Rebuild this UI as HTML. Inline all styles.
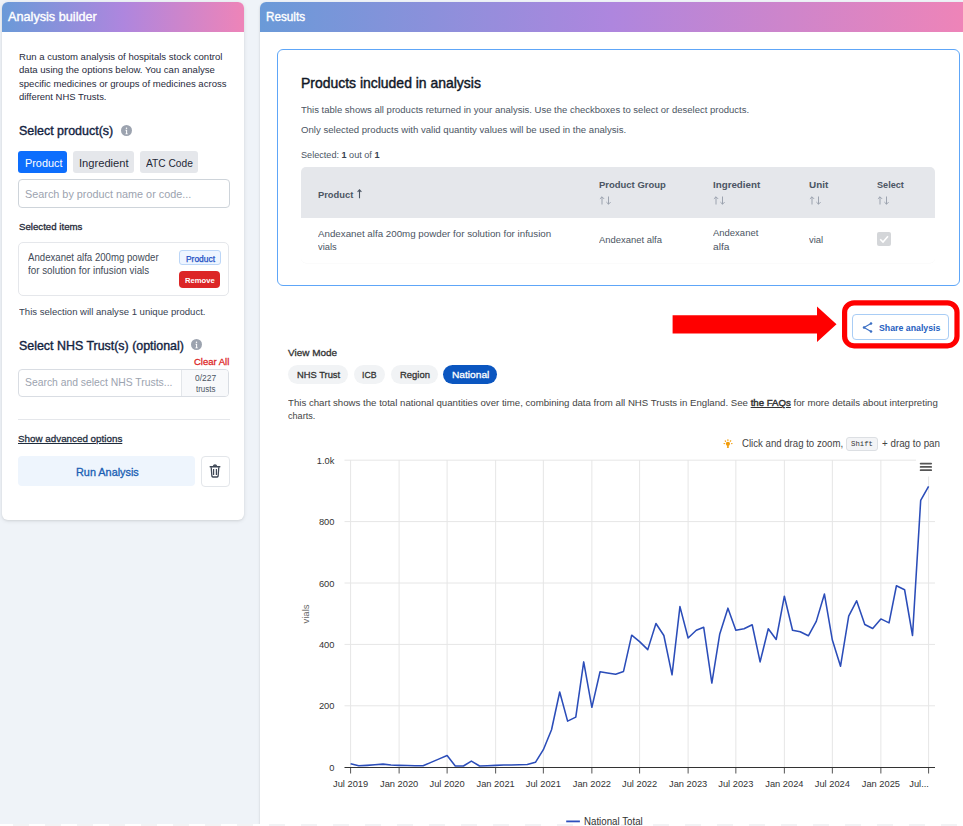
<!DOCTYPE html>
<html><head><meta charset="utf-8"><style>
html,body{margin:0;padding:0;}
body{width:963px;height:826px;overflow:hidden;position:relative;background:#eff3f8;font-family:"Liberation Sans", sans-serif;}
.t{position:absolute;white-space:pre;line-height:1;}
b{font-weight:700;}
</style></head><body>
<div style="position:absolute;left:2.00px;top:2.00px;width:242.00px;height:517.50px;background:#fff;border-radius:6px;box-shadow:0 1px 4px rgba(0,0,0,0.10),0 1px 2px rgba(0,0,0,0.05);"></div>
<div style="position:absolute;left:2.00px;top:2.00px;width:242.00px;height:30.30px;background:linear-gradient(90deg,#6a9ad8 0%,#ae86de 50%,#ee84b8 100%);border-radius:6px 6px 0 0;"></div>
<span id="t1" class="t" style="left:7.60px;transform-origin:0 0;top:12.35px;font-size:11.90px;color:#fff;font-weight:400;transform:scaleX(1.0663);-webkit-text-stroke:0.36px currentColor;">Analysis builder</span>
<span id="t2" class="t" style="left:18.70px;transform-origin:0 0;top:51.85px;font-size:9.90px;color:#1f2a3c;font-weight:400;transform:scaleX(0.9676);">Run a custom analysis of hospitals stock control</span>
<span id="t3" class="t" style="left:18.70px;transform-origin:0 0;top:64.85px;font-size:9.90px;color:#1f2a3c;font-weight:400;transform:scaleX(0.9696);">data using the options below. You can analyse</span>
<span id="t4" class="t" style="left:18.70px;transform-origin:0 0;top:78.85px;font-size:9.90px;color:#1f2a3c;font-weight:400;transform:scaleX(0.9669);">specific medicines or groups of medicines across</span>
<span id="t5" class="t" style="left:18.70px;transform-origin:0 0;top:91.85px;font-size:9.90px;color:#1f2a3c;font-weight:400;transform:scaleX(0.9566);">different NHS Trusts.</span>
<span id="t6" class="t" style="left:18.70px;transform-origin:0 0;top:125.20px;font-size:12.20px;color:#13233f;font-weight:400;transform:scaleX(1.0225);-webkit-text-stroke:0.37px currentColor;">Select product(s)</span>
<svg style="position:absolute;left:120.8px;top:125.3px" width="11" height="11" viewBox="0 0 16 16"><circle cx="8" cy="8" r="8" fill="#9ca3af"/><circle cx="8" cy="4.6" r="1.1" fill="#fff"/><path d="M6.6 7h2.3v5.2h1v1.2H6.4v-1.2h1V8.2h-.8z" fill="#fff"/></svg>
<div style="position:absolute;left:18.40px;top:151.20px;width:49.00px;height:22.20px;background:#0d6efd;border-radius:3px;"></div>
<span id="t7" class="t" style="left:24.50px;transform-origin:0 0;top:158.00px;font-size:10.60px;color:#fff;font-weight:400;transform:scaleX(1.0242);">Product</span>
<div style="position:absolute;left:73.20px;top:151.20px;width:61.10px;height:22.20px;background:#e5e7eb;border-radius:3px;"></div>
<span id="t8" class="t" style="left:79.30px;transform-origin:0 0;top:158.00px;font-size:10.60px;color:#1f2937;font-weight:400;transform:scaleX(1.0525);">Ingredient</span>
<div style="position:absolute;left:140.30px;top:151.20px;width:57.70px;height:22.20px;background:#e5e7eb;border-radius:3px;"></div>
<span id="t9" class="t" style="left:145.80px;transform-origin:0 0;top:158.00px;font-size:10.60px;color:#1f2937;font-weight:400;transform:scaleX(0.9615);">ATC Code</span>
<div style="position:absolute;left:18.40px;top:179.30px;width:211.20px;height:28.30px;box-sizing:border-box;border:1px solid #ced4da;border-radius:4px;background:#fff;"></div>
<span id="t10" class="t" style="left:24.80px;transform-origin:0 0;top:189.00px;font-size:10.60px;color:#9ca3af;font-weight:400;transform:scaleX(1.0232);">Search by product name or code...</span>
<span id="t11" class="t" style="left:18.70px;transform-origin:0 0;top:222.10px;font-size:9.40px;color:#1f2937;font-weight:400;transform:scaleX(1.0309);-webkit-text-stroke:0.28px currentColor;">Selected items</span>
<div style="position:absolute;left:18.40px;top:241.50px;width:211.00px;height:54.70px;box-sizing:border-box;border:1px solid #e5e7eb;border-radius:5px;background:#fff;"></div>
<span id="t12" class="t" style="left:27.50px;transform-origin:0 0;top:252.76px;font-size:10.08px;color:#434b57;font-weight:400;transform:scaleX(0.9552);">Andexanet alfa 200mg powder</span>
<span id="t13" class="t" style="left:27.50px;transform-origin:0 0;top:265.76px;font-size:10.08px;color:#434b57;font-weight:400;transform:scaleX(0.9746);">for solution for infusion vials</span>
<div style="position:absolute;left:178.90px;top:250.20px;width:41.80px;height:15.20px;box-sizing:border-box;background:#eef5ff;border:1px solid #bcd6f7;border-radius:3px;"></div>
<span id="t14" class="t" style="left:185.80px;transform-origin:0 0;top:255.70px;font-size:8.20px;color:#1d4fc4;font-weight:400;transform:scaleX(1.0277);-webkit-text-stroke:0.25px currentColor;">Product</span>
<div style="position:absolute;left:179.20px;top:271.00px;width:40.70px;height:16.50px;background:#dc2626;border-radius:4px;"></div>
<span id="t15" class="t" style="left:185.00px;transform-origin:0 0;top:276.80px;font-size:8.00px;color:#fff;font-weight:700;transform:scaleX(0.9574);">Remove</span>
<span id="t16" class="t" style="left:18.50px;transform-origin:0 0;top:306.81px;font-size:9.97px;color:#374151;font-weight:400;transform:scaleX(0.9589);">This selection will analyse 1 unique product.</span>
<span id="t17" class="t" style="left:18.70px;transform-origin:0 0;top:340.20px;font-size:12.20px;color:#13233f;font-weight:400;transform:scaleX(1.0187);-webkit-text-stroke:0.37px currentColor;">Select NHS Trust(s) (optional)</span>
<svg style="position:absolute;left:191.1px;top:339.4px" width="11" height="11" viewBox="0 0 16 16"><circle cx="8" cy="8" r="8" fill="#9ca3af"/><circle cx="8" cy="4.6" r="1.1" fill="#fff"/><path d="M6.6 7h2.3v5.2h1v1.2H6.4v-1.2h1V8.2h-.8z" fill="#fff"/></svg>
<span id="t18" class="t" style="left:193.80px;transform-origin:0 0;top:357.80px;font-size:9.00px;color:#dc2626;font-weight:400;transform:scaleX(1.0532);-webkit-text-stroke:0.27px currentColor;">Clear All</span>
<div style="position:absolute;left:18.40px;top:368.50px;width:211.00px;height:28.70px;box-sizing:border-box;border:1px solid #d9dde3;border-radius:4px;background:#fff;"></div>
<div style="position:absolute;left:181.40px;top:369.50px;width:47.00px;height:26.70px;background:#f8f9fb;border-left:1px solid #e3e6ea;border-radius:0 3px 3px 0;box-sizing:border-box;"></div>
<span id="t19" class="t" style="left:24.80px;transform-origin:0 0;top:377.65px;font-size:10.30px;color:#9ca3af;font-weight:400;transform:scaleX(1.0060);">Search and select NHS Trusts...</span>
<span id="t20" class="t" style="left:194.80px;transform-origin:0 0;top:374.05px;font-size:8.51px;color:#4b5563;font-weight:400;transform:scaleX(0.9915);">0/227</span>
<span id="t21" class="t" style="left:195.70px;transform-origin:0 0;top:385.05px;font-size:8.51px;color:#4b5563;font-weight:400;transform:scaleX(0.9335);">trusts</span>
<div style="position:absolute;left:18.40px;top:419.10px;width:211.30px;height:1.00px;background:#e5e7eb;"></div>
<span id="t22" class="t" style="left:18.40px;transform-origin:0 0;top:434.10px;font-size:9.40px;color:#1f2d3d;font-weight:400;transform:scaleX(1.0476);text-decoration:underline;-webkit-text-stroke:0.28px currentColor;">Show advanced options</span>
<div style="position:absolute;left:18.40px;top:456.20px;width:176.70px;height:30.20px;background:#eef5fd;border-radius:4px;"></div>
<span id="t23" class="t" style="left:75.70px;transform-origin:0 0;top:466.90px;font-size:10.80px;color:#1a5fb4;font-weight:400;transform:scaleX(1.0061);-webkit-text-stroke:0.32px currentColor;">Run Analysis</span>
<div style="position:absolute;left:201.00px;top:456.20px;width:29.00px;height:30.60px;box-sizing:border-box;border:1px solid #e3e6ea;border-radius:4px;background:#fff;"></div>
<svg style="position:absolute;left:209.2px;top:464.0px" width="12" height="14" viewBox="0 0 12 14"><path d="M4.5 2.2 Q4.7 1 6 1 Q7.3 1 7.5 2.2" fill="none" stroke="#3f4856" stroke-width="1.3"/><path d="M1.2 2.8 H10.8" stroke="#3f4856" stroke-width="1.4" stroke-linecap="round"/><path d="M2.2 3.2 L2.9 12.2 Q3 13 3.8 13 H8.2 Q9 13 9.1 12.2 L9.8 3.2" fill="none" stroke="#3f4856" stroke-width="1.3"/><path d="M4.6 5 V11 M7.4 5 V11" stroke="#3f4856" stroke-width="1.2"/></svg>
<div style="position:absolute;left:260.00px;top:2.00px;width:740.00px;height:898.00px;background:#fff;border-radius:6px 0 0 0;box-shadow:0 1px 3px rgba(0,0,0,0.12),0 1px 2px rgba(0,0,0,0.06);"></div>
<div style="position:absolute;left:260.00px;top:2.00px;width:703.00px;height:30.30px;background:linear-gradient(90deg,#6a9ad8 0%,#ae86de 50%,#ee84b8 100%);border-radius:6px 0 0 0;"></div>
<span id="t24" class="t" style="left:266.20px;transform-origin:0 0;top:12.35px;font-size:11.90px;color:#fff;font-weight:400;transform:scaleX(0.9860);-webkit-text-stroke:0.36px currentColor;">Results</span>
<div style="position:absolute;left:277.30px;top:49.20px;width:682.90px;height:237.00px;box-sizing:border-box;border:1.5px solid #5ea6f8;border-radius:6px;background:#fff;"></div>
<span id="t25" class="t" style="left:300.90px;transform-origin:0 0;top:76.15px;font-size:14.30px;color:#111827;font-weight:400;transform:scaleX(0.9757);-webkit-text-stroke:0.43px currentColor;">Products included in analysis</span>
<span id="t26" class="t" style="left:300.90px;transform-origin:0 0;top:104.86px;font-size:9.87px;color:#4b5563;font-weight:400;transform:scaleX(0.9642);">This table shows all products returned in your analysis. Use the checkboxes to select or deselect products.</span>
<span id="t27" class="t" style="left:300.90px;transform-origin:0 0;top:124.86px;font-size:9.87px;color:#4b5563;font-weight:400;transform:scaleX(0.9727);">Only selected products with valid quantity values will be used in the analysis.</span>
<span id="t28" class="t" style="left:300.90px;transform-origin:0 0;top:149.97px;font-size:9.66px;color:#4b5563;font-weight:400;transform:scaleX(0.9431);">Selected: <b style="color:#374151">1</b> out of <b style="color:#374151">1</b></span>
<div style="position:absolute;left:300.70px;top:167.00px;width:634.30px;height:95.50px;background:#fff;border-radius:5px;box-shadow:0 0.5px 0.5px rgba(0,0,0,0.03);"></div>
<div style="position:absolute;left:300.70px;top:167.00px;width:634.30px;height:50.60px;background:#e5e7eb;border-radius:5px 5px 0 0;"></div>
<span id="t29" class="t" style="left:317.80px;transform-origin:0 0;top:190.80px;font-size:9.00px;color:#4b5563;font-weight:700;transform:scaleX(1.0378);">Product</span>
<svg style="position:absolute;left:356px;top:189.2px" width="7" height="9.5" viewBox="0 0 7 9.5"><path d="M3.5 0.8 V9.2 M1.6 2.8 L3.5 0.8 L5.4 2.8" fill="none" stroke="#4b5563" stroke-width="1.1"/></svg>
<span id="t30" class="t" style="left:598.50px;transform-origin:0 0;top:180.70px;font-size:9.20px;color:#4b5563;font-weight:700;transform:scaleX(1.0304);">Product Group</span>
<svg style="position:absolute;left:598.5px;top:195.5px" width="13" height="9" viewBox="0 0 13 9"><path d="M3 0.8 V8.5 M0.9 2.9 L3 0.8 L5.1 2.9 M9.5 0.5 V8.2 M7.4 6.1 L9.5 8.2 L11.6 6.1" fill="none" stroke="#9ca3af" stroke-width="1"/></svg>
<span id="t31" class="t" style="left:713.00px;transform-origin:0 0;top:180.70px;font-size:9.20px;color:#4b5563;font-weight:700;transform:scaleX(1.0625);">Ingredient</span>
<svg style="position:absolute;left:713.0px;top:195.5px" width="13" height="9" viewBox="0 0 13 9"><path d="M3 0.8 V8.5 M0.9 2.9 L3 0.8 L5.1 2.9 M9.5 0.5 V8.2 M7.4 6.1 L9.5 8.2 L11.6 6.1" fill="none" stroke="#9ca3af" stroke-width="1"/></svg>
<span id="t32" class="t" style="left:809.00px;transform-origin:0 0;top:180.70px;font-size:9.20px;color:#4b5563;font-weight:700;transform:scaleX(1.0751);">Unit</span>
<svg style="position:absolute;left:809.0px;top:195.5px" width="13" height="9" viewBox="0 0 13 9"><path d="M3 0.8 V8.5 M0.9 2.9 L3 0.8 L5.1 2.9 M9.5 0.5 V8.2 M7.4 6.1 L9.5 8.2 L11.6 6.1" fill="none" stroke="#9ca3af" stroke-width="1"/></svg>
<span id="t33" class="t" style="left:876.60px;transform-origin:0 0;top:180.70px;font-size:9.20px;color:#4b5563;font-weight:700;transform:scaleX(0.9934);">Select</span>
<svg style="position:absolute;left:876.6px;top:195.5px" width="13" height="9" viewBox="0 0 13 9"><path d="M3 0.8 V8.5 M0.9 2.9 L3 0.8 L5.1 2.9 M9.5 0.5 V8.2 M7.4 6.1 L9.5 8.2 L11.6 6.1" fill="none" stroke="#9ca3af" stroke-width="1"/></svg>
<span id="t34" class="t" style="left:317.80px;transform-origin:0 0;top:228.81px;font-size:9.97px;color:#4b5563;font-weight:400;transform:scaleX(0.9786);">Andexanet alfa 200mg powder for solution for infusion</span>
<span id="t35" class="t" style="left:317.80px;transform-origin:0 0;top:241.81px;font-size:9.97px;color:#4b5563;font-weight:400;transform:scaleX(0.9372);">vials</span>
<span id="t36" class="t" style="left:598.50px;transform-origin:0 0;top:234.81px;font-size:9.97px;color:#4b5563;font-weight:400;transform:scaleX(0.9471);">Andexanet alfa</span>
<span id="t37" class="t" style="left:713.00px;transform-origin:0 0;top:227.81px;font-size:9.97px;color:#4b5563;font-weight:400;transform:scaleX(0.9502);">Andexanet</span>
<span id="t38" class="t" style="left:713.00px;transform-origin:0 0;top:241.81px;font-size:9.97px;color:#4b5563;font-weight:400;transform:scaleX(1.0262);">alfa</span>
<span id="t39" class="t" style="left:809.00px;transform-origin:0 0;top:234.81px;font-size:9.97px;color:#4b5563;font-weight:400;transform:scaleX(0.9486);">vial</span>
<svg style="position:absolute;left:876.6px;top:231.8px" width="14" height="14" viewBox="0 0 14 14"><rect x="0" y="0" width="14" height="14" rx="2" fill="#d4d6d9"/><path d="M3.2 7.2 L6 10 L11 4.2" fill="none" stroke="#fff" stroke-width="1.6"/></svg>
<svg style="position:absolute;left:0;top:0" width="963" height="826"><polygon points="672.6,315.2 817,315.2 817,306.4 836.5,324.3 817,342 817,333.4 672.6,333.4" fill="#ff0000"/><rect x="844.6" y="302.8" width="112.4" height="43" rx="9.5" fill="none" stroke="#ff0000" stroke-width="5.2"/></svg>
<div style="position:absolute;left:852.00px;top:314.00px;width:97.00px;height:25.50px;box-sizing:border-box;border:1px solid #a9cdf5;border-radius:4px;background:#fff;"></div>
<svg style="position:absolute;left:861.5px;top:321.5px" width="11" height="11" viewBox="0 0 11 11"><path d="M9 1.6 L2 5.5 L9 9.4" fill="none" stroke="#3b6fc4" stroke-width="1.1"/><circle cx="9" cy="1.6" r="1.25" fill="#3b6fc4"/><circle cx="2" cy="5.5" r="1.25" fill="#3b6fc4"/><circle cx="9" cy="9.4" r="1.25" fill="#3b6fc4"/></svg>
<span id="t40" class="t" style="left:878.60px;transform-origin:0 0;top:322.90px;font-size:9.80px;color:#2560c0;font-weight:700;transform:scaleX(0.8947);">Share analysis</span>
<span id="t41" class="t" style="left:288.20px;transform-origin:0 0;top:348.00px;font-size:9.60px;color:#333;font-weight:400;transform:scaleX(1.0381);-webkit-text-stroke:0.29px currentColor;">View Mode</span>
<div style="position:absolute;left:288.20px;top:364.90px;width:60.30px;height:19.20px;background:#f1f3f5;border-radius:10px;"></div>
<span id="t42" class="t" style="left:296.70px;transform-origin:0 0;top:370.00px;font-size:9.60px;color:#333;font-weight:400;transform:scaleX(0.9740);-webkit-text-stroke:0.29px currentColor;">NHS Trust</span>
<div style="position:absolute;left:354.30px;top:364.90px;width:30.60px;height:19.20px;background:#f1f3f5;border-radius:10px;"></div>
<span id="t43" class="t" style="left:362.20px;transform-origin:0 0;top:370.00px;font-size:9.60px;color:#333;font-weight:400;transform:scaleX(0.9062);-webkit-text-stroke:0.29px currentColor;">ICB</span>
<div style="position:absolute;left:390.90px;top:364.90px;width:46.90px;height:19.20px;background:#f1f3f5;border-radius:10px;"></div>
<span id="t44" class="t" style="left:399.60px;transform-origin:0 0;top:370.00px;font-size:9.60px;color:#333;font-weight:400;transform:scaleX(0.9834);-webkit-text-stroke:0.29px currentColor;">Region</span>
<div style="position:absolute;left:443.20px;top:364.90px;width:54.10px;height:19.20px;background:#0b56c0;border-radius:10px;"></div>
<span id="t45" class="t" style="left:452.00px;transform-origin:0 0;top:370.00px;font-size:9.60px;color:#fff;font-weight:400;transform:scaleX(1.0596);-webkit-text-stroke:0.29px currentColor;">National</span>
<span id="t46" class="t" style="left:288.20px;transform-origin:0 0;top:397.81px;font-size:9.97px;color:#444;font-weight:400;transform:scaleX(0.9675);">This chart shows the total national quantities over time, combining data from all NHS Trusts in England. See <span style="text-decoration:underline;color:#333;-webkit-text-stroke:0.45px #333">the FAQs</span> for more details about interpreting</span>
<span id="t47" class="t" style="left:288.20px;transform-origin:0 0;top:410.81px;font-size:9.97px;color:#444;font-weight:400;transform:scaleX(0.9124);">charts.</span>
<svg style="position:absolute;left:718px;top:434px" width="20" height="20" viewBox="0 0 20 20"><g fill="#f29d0b"><circle cx="9.9" cy="9.8" r="2.1"/><rect x="9.0" y="11.2" width="1.8" height="1.6"/><ellipse cx="9.9" cy="13.3" rx="1.1" ry="0.8"/><ellipse cx="9.9" cy="6.1" rx="0.7" ry="0.9"/><ellipse cx="7.4" cy="7.1" rx="0.7" ry="0.85" transform="rotate(-40 7.4 7.1)"/><ellipse cx="12.5" cy="7.0" rx="0.7" ry="0.85" transform="rotate(40 12.5 7.0)"/><ellipse cx="6.3" cy="9.6" rx="0.85" ry="0.65"/><ellipse cx="13.8" cy="9.6" rx="0.85" ry="0.65"/></g></svg>
<span id="t48" class="t" style="left:741.70px;transform-origin:0 0;top:438.76px;font-size:10.08px;color:#444;font-weight:400;transform:scaleX(0.9549);">Click and drag to zoom,</span>
<div style="position:absolute;left:845.60px;top:437.40px;width:32.30px;height:13.40px;box-sizing:border-box;background:#f3f4f6;border:1px solid #dcdfe3;border-radius:3px;"></div>
<span id="t49" class="t" style="left:850.70px;transform-origin:0 0;top:441.15px;font-size:7.30px;color:#333;font-weight:400;transform:scaleX(0.9997);font-family:'Liberation Mono',monospace;">Shift</span>
<span id="t50" class="t" style="left:882.20px;transform-origin:0 0;top:438.76px;font-size:10.08px;color:#444;font-weight:400;transform:scaleX(0.9717);">+ drag to pan</span>
<div style="position:absolute;left:0.00px;top:824.00px;width:963.00px;height:2.00px;background:repeating-linear-gradient(90deg,#fff 0px,#fff 13px,#f2f3f5 13px,#f2f3f5 29px,#fff 29px,#fff 32px);"></div>
<svg style="position:absolute;left:0;top:0" width="963" height="826"><line x1="344.5" x2="935" y1="705.80" y2="705.80" stroke="#e6e6e6" stroke-width="1"/><line x1="344.5" x2="935" y1="644.40" y2="644.40" stroke="#e6e6e6" stroke-width="1"/><line x1="344.5" x2="935" y1="583.00" y2="583.00" stroke="#e6e6e6" stroke-width="1"/><line x1="344.5" x2="935" y1="521.60" y2="521.60" stroke="#e6e6e6" stroke-width="1"/><line x1="344.5" x2="916" y1="460.20" y2="460.20" stroke="#e6e6e6" stroke-width="1"/><line x1="350.60" x2="350.60" y1="460" y2="767" stroke="#e6e6e6" stroke-width="1"/><line x1="350.60" x2="350.60" y1="767" y2="773.5" stroke="#555" stroke-width="1"/><line x1="399.12" x2="399.12" y1="460" y2="767" stroke="#e6e6e6" stroke-width="1"/><line x1="399.12" x2="399.12" y1="767" y2="773.5" stroke="#555" stroke-width="1"/><line x1="447.11" x2="447.11" y1="460" y2="767" stroke="#e6e6e6" stroke-width="1"/><line x1="447.11" x2="447.11" y1="767" y2="773.5" stroke="#555" stroke-width="1"/><line x1="495.63" x2="495.63" y1="460" y2="767" stroke="#e6e6e6" stroke-width="1"/><line x1="495.63" x2="495.63" y1="767" y2="773.5" stroke="#555" stroke-width="1"/><line x1="543.35" x2="543.35" y1="460" y2="767" stroke="#e6e6e6" stroke-width="1"/><line x1="543.35" x2="543.35" y1="767" y2="773.5" stroke="#555" stroke-width="1"/><line x1="591.87" x2="591.87" y1="460" y2="767" stroke="#e6e6e6" stroke-width="1"/><line x1="591.87" x2="591.87" y1="767" y2="773.5" stroke="#555" stroke-width="1"/><line x1="639.60" x2="639.60" y1="460" y2="767" stroke="#e6e6e6" stroke-width="1"/><line x1="639.60" x2="639.60" y1="767" y2="773.5" stroke="#555" stroke-width="1"/><line x1="688.12" x2="688.12" y1="460" y2="767" stroke="#e6e6e6" stroke-width="1"/><line x1="688.12" x2="688.12" y1="767" y2="773.5" stroke="#555" stroke-width="1"/><line x1="735.85" x2="735.85" y1="460" y2="767" stroke="#e6e6e6" stroke-width="1"/><line x1="735.85" x2="735.85" y1="767" y2="773.5" stroke="#555" stroke-width="1"/><line x1="784.36" x2="784.36" y1="460" y2="767" stroke="#e6e6e6" stroke-width="1"/><line x1="784.36" x2="784.36" y1="767" y2="773.5" stroke="#555" stroke-width="1"/><line x1="832.35" x2="832.35" y1="460" y2="767" stroke="#e6e6e6" stroke-width="1"/><line x1="832.35" x2="832.35" y1="767" y2="773.5" stroke="#555" stroke-width="1"/><line x1="880.87" x2="880.87" y1="460" y2="767" stroke="#e6e6e6" stroke-width="1"/><line x1="880.87" x2="880.87" y1="767" y2="773.5" stroke="#555" stroke-width="1"/><line x1="928.60" x2="928.60" y1="460" y2="767" stroke="#e6e6e6" stroke-width="1"/><line x1="928.60" x2="928.60" y1="767" y2="773.5" stroke="#555" stroke-width="1"/><line x1="344.5" x2="935" y1="767.5" y2="767.5" stroke="#333" stroke-width="1.2"/><polyline points="350.60,763.82 358.77,765.82 366.95,765.36 374.86,764.74 383.03,764.13 390.94,765.05 399.12,765.36 407.29,765.51 414.94,765.67 423.11,765.82 431.02,762.38 439.20,758.91 447.11,755.53 455.28,765.97 463.46,765.97 471.37,761.06 479.54,765.97 487.45,765.67 495.63,765.36 503.80,765.05 511.18,764.90 519.36,764.74 527.27,764.44 535.44,762.29 543.35,749.70 551.53,729.75 559.70,691.99 567.61,721.15 575.79,717.16 583.70,661.90 591.87,707.34 600.05,671.72 607.43,672.95 615.60,674.18 623.52,671.42 631.69,635.19 639.60,641.64 647.77,649.62 655.95,623.52 663.86,635.50 672.03,674.79 679.94,606.64 688.12,637.95 696.29,630.28 703.68,627.21 711.85,683.08 719.76,633.96 727.93,608.17 735.85,630.28 744.02,628.74 752.19,624.75 760.10,661.90 768.28,628.74 776.19,639.49 784.36,596.20 792.54,630.28 800.18,631.81 808.36,635.80 816.27,621.38 824.44,594.05 832.35,640.10 840.53,666.20 848.70,616.16 856.61,600.81 864.79,624.45 872.70,628.44 880.87,618.92 889.05,622.91 896.43,585.76 904.60,589.75 912.52,635.50 920.69,500.42 928.60,486.30" fill="none" stroke="#2b4db9" stroke-width="1.55" stroke-linejoin="round"/><rect x="916.5" y="452" width="24" height="24.5" fill="#fff"/><line x1="920.6" x2="931.2" y1="463.6" y2="463.6" stroke="#555" stroke-width="1.7" stroke-linecap="round"/><line x1="920.6" x2="931.2" y1="466.9" y2="466.9" stroke="#555" stroke-width="1.7" stroke-linecap="round"/><line x1="920.6" x2="931.2" y1="470.2" y2="470.2" stroke="#555" stroke-width="1.7" stroke-linecap="round"/><line x1="566.2" x2="579.9" y1="821.4" y2="821.4" stroke="#2d4fbd" stroke-width="1.8"/></svg>
<span id="t51" class="t" style="right:628.60px;transform-origin:100% 0;top:763.65px;font-size:9.30px;color:#333;font-weight:400;">0</span>
<span id="t52" class="t" style="right:628.60px;transform-origin:100% 0;top:701.65px;font-size:9.30px;color:#333;font-weight:400;">200</span>
<span id="t53" class="t" style="right:628.60px;transform-origin:100% 0;top:640.65px;font-size:9.30px;color:#333;font-weight:400;">400</span>
<span id="t54" class="t" style="right:628.60px;transform-origin:100% 0;top:579.65px;font-size:9.30px;color:#333;font-weight:400;">600</span>
<span id="t55" class="t" style="right:628.60px;transform-origin:100% 0;top:517.65px;font-size:9.30px;color:#333;font-weight:400;">800</span>
<span id="t56" class="t" style="right:628.60px;transform-origin:100% 0;top:456.65px;font-size:9.30px;color:#333;font-weight:400;">1.0k</span>
<div style="position:absolute;left:305.2px;top:613.5px;width:0;height:0;"><span style="position:absolute;transform:translate(-50%,-50%) rotate(-90deg);font-size:9.6px;color:#666;white-space:pre;">vials</span></div>
<div class="t" style="left:350.60px;width:0;display:flex;justify-content:center;top:779.65px;font-size:9.30px;color:#333;font-weight:400;"><span id="t57" style="white-space:pre;display:inline-block;transform-origin:50% 0;">Jul 2019</span></div>
<div class="t" style="left:399.12px;width:0;display:flex;justify-content:center;top:779.65px;font-size:9.30px;color:#333;font-weight:400;"><span id="t58" style="white-space:pre;display:inline-block;transform-origin:50% 0;">Jan 2020</span></div>
<div class="t" style="left:447.11px;width:0;display:flex;justify-content:center;top:779.65px;font-size:9.30px;color:#333;font-weight:400;"><span id="t59" style="white-space:pre;display:inline-block;transform-origin:50% 0;">Jul 2020</span></div>
<div class="t" style="left:495.63px;width:0;display:flex;justify-content:center;top:779.65px;font-size:9.30px;color:#333;font-weight:400;"><span id="t60" style="white-space:pre;display:inline-block;transform-origin:50% 0;">Jan 2021</span></div>
<div class="t" style="left:543.35px;width:0;display:flex;justify-content:center;top:779.65px;font-size:9.30px;color:#333;font-weight:400;"><span id="t61" style="white-space:pre;display:inline-block;transform-origin:50% 0;">Jul 2021</span></div>
<div class="t" style="left:591.87px;width:0;display:flex;justify-content:center;top:779.65px;font-size:9.30px;color:#333;font-weight:400;"><span id="t62" style="white-space:pre;display:inline-block;transform-origin:50% 0;">Jan 2022</span></div>
<div class="t" style="left:639.60px;width:0;display:flex;justify-content:center;top:779.65px;font-size:9.30px;color:#333;font-weight:400;"><span id="t63" style="white-space:pre;display:inline-block;transform-origin:50% 0;">Jul 2022</span></div>
<div class="t" style="left:688.12px;width:0;display:flex;justify-content:center;top:779.65px;font-size:9.30px;color:#333;font-weight:400;"><span id="t64" style="white-space:pre;display:inline-block;transform-origin:50% 0;">Jan 2023</span></div>
<div class="t" style="left:735.85px;width:0;display:flex;justify-content:center;top:779.65px;font-size:9.30px;color:#333;font-weight:400;"><span id="t65" style="white-space:pre;display:inline-block;transform-origin:50% 0;">Jul 2023</span></div>
<div class="t" style="left:784.36px;width:0;display:flex;justify-content:center;top:779.65px;font-size:9.30px;color:#333;font-weight:400;"><span id="t66" style="white-space:pre;display:inline-block;transform-origin:50% 0;">Jan 2024</span></div>
<div class="t" style="left:832.35px;width:0;display:flex;justify-content:center;top:779.65px;font-size:9.30px;color:#333;font-weight:400;"><span id="t67" style="white-space:pre;display:inline-block;transform-origin:50% 0;">Jul 2024</span></div>
<div class="t" style="left:880.87px;width:0;display:flex;justify-content:center;top:779.65px;font-size:9.30px;color:#333;font-weight:400;"><span id="t68" style="white-space:pre;display:inline-block;transform-origin:50% 0;">Jan 2025</span></div>
<span id="t69" class="t" style="right:34.10px;transform-origin:100% 0;top:779.65px;font-size:9.30px;color:#333;font-weight:400;">Jul...</span>
<span id="t70" class="t" style="left:584.00px;transform-origin:0 0;top:816.76px;font-size:10.08px;color:#333;font-weight:400;transform:scaleX(0.9640);">National Total</span>
</body></html>
